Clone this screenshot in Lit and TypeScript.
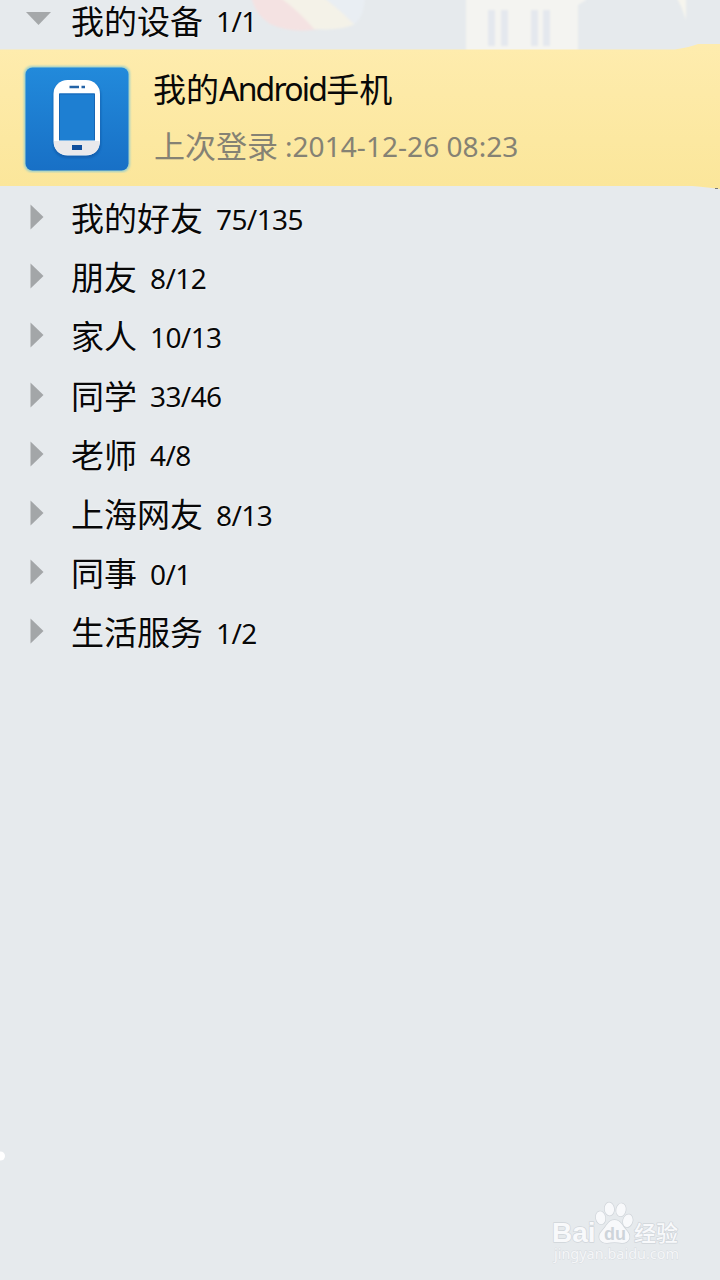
import { LitElement, html, svg, css } from "lit";
import { customElement } from "lit/decorators.js";

interface Group {
  name: string;
  count: string;
}

const GROUPS: Group[] = [
  { name: "我的好友", count: "75/135" },
  { name: "朋友", count: "8/12" },
  { name: "家人", count: "10/13" },
  { name: "同学", count: "33/46" },
  { name: "老师", count: "4/8" },
  { name: "上海网友", count: "8/13" },
  { name: "同事", count: "0/1" },
  { name: "生活服务", count: "1/2" },
];

// Paw toes: centre x, centre y, tilt in degrees.
const TOES = [
  [60.6, 27.8, -12],
  [69.4, 19, -5],
  [81, 19.8, 10],
  [87.8, 30.8, 15],
];

@customElement("app-root")
export class AppRoot extends LitElement {
  static styles = css`
    :host {
      display: block;
      position: relative;
      width: 720px;
      height: 1280px;
      overflow: hidden;
      background: #e6eaed;
      color: #080808;
      font-family: "Noto Sans", "Noto Sans CJK SC", sans-serif;
    }
    .scenery {
      position: absolute;
      inset: 0;
      display: block;
    }
    .page {
      position: relative;
      display: flex;
      flex-direction: column;
    }
    .row {
      display: flex;
      align-items: center;
      box-sizing: border-box;
      height: 59.2px;
      padding: 0 0 4px 30px;
      white-space: nowrap;
    }
    .head {
      height: 49px;
      padding: 0 0 10px 25px;
    }
    .arrow {
      flex: none;
      width: 41px;
      height: 26px;
    }
    .head .arrow {
      width: 46px;
      margin-top: -5px;
    }
    .name {
      font: 33px/36px "Noto Sans CJK SC", sans-serif;
      text-shadow: 0 0 2px #fff;
    }
    .count {
      font-size: 28px;
      line-height: 36px;
      letter-spacing: -0.6px;
      margin: 3px 0 0 13px;
      text-shadow: 0 0 2px #fff;
    }
    .device {
      display: flex;
      box-sizing: border-box;
      height: 137px;
      padding: 14px 0 0 22px;
      margin-bottom: 3.5px;
      white-space: nowrap;
    }
    .phone {
      flex: none;
      width: 110px;
      height: 110px;
    }
    .info {
      display: flex;
      flex-direction: column;
      padding-left: 21px;
    }
    .title {
      display: flex;
      height: 52px;
      font: 33px/50px "Noto Sans CJK SC", sans-serif;
    }
    .latin {
      font-family: "Noto Sans", sans-serif;
      font-size: 32px;
      line-height: 52px;
      letter-spacing: -1.8px;
    }
    .last {
      display: flex;
      height: 60px;
      padding-left: 1px;
      color: #858274;
      font: 31px/60px "Noto Sans CJK SC", sans-serif;
    }
    .time {
      font-family: "Noto Sans", sans-serif;
      font-size: 28px;
      line-height: 62px;
      letter-spacing: 0.05px;
      margin-left: 7px;
    }
    .mark {
      position: absolute;
      left: 540px;
      top: 1190px;
    }
  `;

  private scenery() {
    return html`<svg class="scenery" width="720" height="1280" viewBox="0 0 720 1280">
      <defs>
        <linearGradient id="band" x1="0" y1="0" x2="0" y2="1">
          <stop offset="0" stop-color="#feecae" />
          <stop offset="1" stop-color="#fbe69a" />
        </linearGradient>
        <filter id="haze">
          <feGaussianBlur stdDeviation="0.9" />
        </filter>
      </defs>
      <g filter="url(#haze)">
        <path d="M252 -4H285L320 29Q292 34 270 24Q256 15 252 0Z" fill="#f4e2e2" />
        <path d="M278 -4H322Q345 14 355 24Q342 31 314 29Q298 10 278 -4Z" fill="#f4f2e8" />
        <path d="M322 -4H365Q364 18 354 24Q340 10 322 -4Z" fill="#e9eef3" />
        <path d="M466 -4H586V0L578 5V54H466Z" fill="#f4f4f1" />
        <path d="M488 10h7v36h-7zM501 10h7v36h-7zM531 10h7v36h-7zM543 10h7v36h-7z" fill="#e4e8ee" />
        <path d="M677 -2H686V20Q683 9 677 -2Z" fill="#f6f5ee" />
      </g>
      <path d="M0 49.500H675Q690 47 698 44H720V189Q704 187 692 186H0Z" fill="url(#band)" />
      <path d="M715 188.5h3" stroke="#777" stroke-width="1" />
      <circle cx="0.5" cy="1156" r="4.5" fill="#fff" />
    </svg>`;
  }

  private arrow(open: boolean) {
    return open
      ? html`<svg class="arrow" viewBox="0 0 46 26"><path d="M1 8H26L13.5 21Z" fill="#a5a8aa" /></svg>`
      : html`<svg class="arrow" viewBox="0 0 41 26"><path d="M.5 .5V25.500L13.5 13Z" fill="#a3a6a8" /></svg>`;
  }

  private phone() {
    return html`<svg class="phone" viewBox="0 0 110 110">
      <defs>
        <linearGradient id="tile" x1="0" y1="0" x2="0" y2="1">
          <stop offset="0" stop-color="#228adb" />
          <stop offset="1" stop-color="#1870c6" />
        </linearGradient>
        <filter id="soft" x="-20%" y="-20%" width="140%" height="140%">
          <feGaussianBlur stdDeviation="1.3" />
        </filter>
      </defs>
      <rect x="2" y="3" width="106" height="106" rx="8" fill="#9bcfc9" filter="url(#soft)" />
      <rect x="3.5" y="4.5" width="103" height="103" rx="7" fill="url(#tile)" />
      <rect x="31" y="19" width="48" height="76" rx="14" fill="#0e529f" opacity=".6" filter="url(#soft)" />
      <rect x="31.5" y="17" width="46.500" height="75.500" rx="14" fill="#fff" />
      <path d="M32 78H77.500V80Q77 92 64 92H46Q33 92 32 80Z" fill="#e9e9ec" />
      <rect x="37" y="30.500" width="36" height="47" fill="#1e7fd2" />
      <path d="M37.500 77V31H72.500V77" fill="none" stroke="#1766b5" />
      <path d="M47.500 24H57M59.500 24H63" stroke="#2463a6" stroke-width="2.600" />
      <rect x="50" y="82" width="10" height="5" fill="#104f9d" />
    </svg>`;
  }

  private mark() {
    return html`<svg class="mark" width="160" height="84" viewBox="0 0 160 84">
      <g fill="#f8f9fb" stroke="#d0d5da" stroke-width="1.4" stroke-linejoin="round" paint-order="stroke">
        <text x="12" y="52" font-family="Liberation Sans, sans-serif" font-weight="700" font-size="28">Bai</text>
        ${TOES.map(
          ([x, y, a]) =>
            svg`<ellipse cx=${x} cy=${y} rx="4.7" ry="6.5" transform="rotate(${a} ${x} ${y})" />`
        )}
        <path d="M74.500 30C81 30 82 36 87 41C92 47 89 53 82 53Q74.500 51.500 67 53C59 53 57 46 62 41C67 36 68 30 74.500 30Z" />
        <text x="94" y="51" font-family="Noto Sans CJK SC, sans-serif" font-weight="500" font-size="22">经验</text>
      </g>
      <text x="64" y="50" font-family="Liberation Sans, sans-serif" font-weight="700" font-size="18" fill="#ced4da">du</text>
      <text x="14" y="69" font-family="Noto Sans, sans-serif" font-size="14" fill="#f5f6f8" stroke="#d6dbdf" stroke-width=".8" paint-order="stroke" textLength="125" lengthAdjust="spacingAndGlyphs">jingyan.baidu.com</text>
    </svg>`;
  }

  render() {
    return html`
      ${this.scenery()}
      <div class="page">
        <div class="row head">
          ${this.arrow(true)}
          <span class="name">我的设备</span><span class="count">1/1</span>
        </div>
        <div class="device">
          ${this.phone()}
          <div class="info">
            <div class="title"><span>我的</span><span class="latin">Android</span><span>手机</span></div>
            <div class="last"><span>上次登录</span><span class="time">:2014-12-26 08:23</span></div>
          </div>
        </div>
        ${GROUPS.map(
          (g) => html`<div class="row">
            ${this.arrow(false)}
            <span class="name">${g.name}</span><span class="count">${g.count}</span>
          </div>`
        )}
      </div>
      ${this.mark()}
    `;
  }
}
